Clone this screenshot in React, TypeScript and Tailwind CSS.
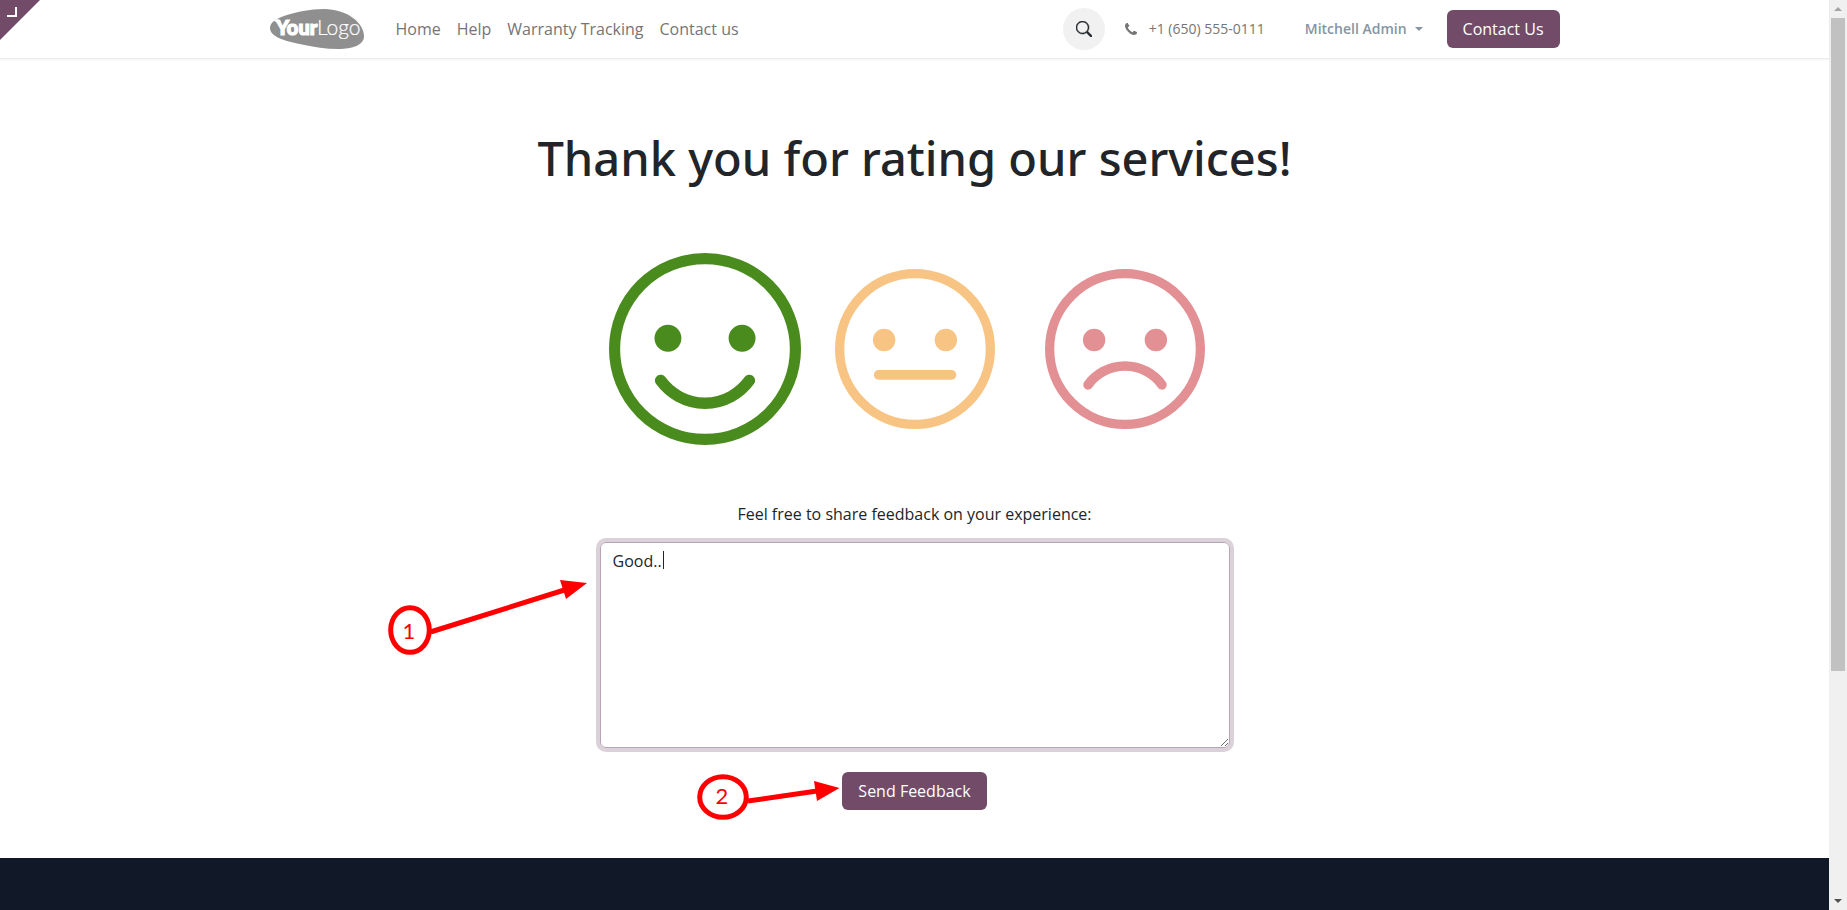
import { useState } from "react";

const NAV = ["Home", "Help", "Warranty Tracking", "Contact us"];

function Logo() {
  return (
    <svg viewBox="0 0 94 40" className="h-10 w-[94px]" role="img" aria-label="Your Logo">
      <path
        d="M0 19C0 14 5 10 14 7C26 3 40 0 54 0C77 0 94 14 94 27C94 36 83 40 68 40C56 40 44 38 32 35.500C13 32 0 27 0 19Z"
        fill="#8f8f8f"
      />
      <path d="M3.500 11.500L6 11L7 10L8.500 11L10 10.500L11 14L8 13.500L6 13Z" fill="#fff" />
      <text x="6" y="26" fontFamily="Lato, sans-serif" fontWeight="900" fontSize="20" fill="#fff" stroke="#fff" strokeWidth="1.200">
        Your
      </text>
      <text x="47" y="26" fontFamily="Lato, sans-serif" fontWeight="300" fontSize="21" fill="#fff" stroke="#fff" strokeWidth="0.200">
        Logo
      </text>
    </svg>
  );
}

const MOUTHS = {
  happy: "M26.900 66.400A28.500 28.500 0 0 0 73.100 66.400",
  neutral: "M27.300 66.200H72.800",
  sad: "M26.900 72.400A28.500 28.500 0 0 1 73.100 72.400",
};

function Face({ mood }: { mood: keyof typeof MOUTHS }) {
  return (
    <svg viewBox="0 0 100 100" className="size-full" aria-hidden="true">
      <circle cx="50" cy="50" r="47.100" fill="none" stroke="currentColor" strokeWidth="5.800" />
      <circle cx="30.700" cy="44.400" r="7" fill="currentColor" />
      <circle cx="69.300" cy="44.400" r="7" fill="currentColor" />
      <path d={MOUTHS[mood]} fill="none" stroke="currentColor" strokeWidth="6" strokeLinecap="round" />
    </svg>
  );
}

function Header() {
  return (
    <header className="border-b border-[#ebebeb] shadow-[0_1px_2px_rgba(0,0,0,0.05)]">
      <div className="mx-auto flex h-[58px] max-w-[1320px] items-center px-[15px]">
        <a href="#home" className="mr-6">
          <Logo />
        </a>
        <nav className="flex">
          {NAV.map((item) => (
            <a key={item} href={`#${item}`} className="px-2 text-base leading-6 text-[#757575]">
              {item}
            </a>
          ))}
        </nav>
        <div className="ml-auto flex items-center">
          <button type="button" aria-label="Search" className="flex size-[42px] items-center justify-center rounded-full bg-[#f1f1f1]">
            <svg viewBox="0 0 16 16" className="size-4" aria-hidden="true" fill="#212529" stroke="#212529" strokeWidth="0.500">
              <path d="M11.742 10.344a6.500 6.500 0 1 0-1.397 1.398h-.001c.030.040.062.078.098.115l3.850 3.850a1 1 0 0 0 1.415-1.414l-3.850-3.850a1.007 1.007 0 0 0-.115-.100zM12 6.500a5.500 5.500 0 1 1-11 0 5.500 5.500 0 0 1 11 0z" />
            </svg>
          </button>
          <a href="tel:+16505550111" className="ml-5 flex items-center text-sm leading-6 text-[#757575]">
            <svg viewBox="0 0 1408 1408" className="mr-3 size-3" aria-hidden="true" fill="currentColor">
              <path d="M1408 1112q0 27-10 70.500t-21 68.500q-21 50-122 106-94 51-186 51-27 0-53-3.500t-57.500-12.500-47-14.500-55.500-20.500-49-18q-98-35-175-83-127-79-264-216t-216-264q-48-77-83-175-3-9-18-49t-20.500-55.500-14.500-47-12.500-57.500-3.500-53q0-92 51-186 56-101 106-122 25-11 68.500-21t70.500-10q14 0 21 3 18 6 53 76 11 19 30 54t35 63.500 31 53.500q3 4 17.500 25t21.500 35.500 7 28.500q0 20-28.500 50t-62 55-62 53-28.500 46q0 9 5 22.500t8.500 20.500 14 24 11.500 19q76 137 174 235t235 174q2 1 19 11.500t24 14 20.500 8.500 22.500 5q18 0 46-28.500t53-62 55-62 50-28.500q14 0 28.500 7t35.500 21.500 25 17.500q25 15 53.500 31t63.500 35 54 30q70 35 76 53 3 7 3 21z" />
            </svg>
            +1 (650) 555-0111
          </a>
          <button type="button" className="ml-10 flex items-center text-sm leading-6 font-semibold text-[#8595a2]">
            Mitchell Admin
            <svg viewBox="0 0 8 4" className="ml-2 h-1 w-2" aria-hidden="true">
              <path d="M0 0H8L4 4Z" fill="currentColor" />
            </svg>
          </button>
          <a href="#contact" className="ml-6 rounded-md bg-[#714b67] px-4 py-[7px] text-base leading-6 text-white">
            Contact Us
          </a>
        </div>
      </div>
    </header>
  );
}

function Notes() {
  return (
    <svg
      viewBox="380 530 470 300"
      className="pointer-events-none absolute -top-3 left-[-220px] h-[300px] w-[470px]"
      fill="none"
      stroke="#f00"
      strokeWidth="5"
    >
      <ellipse cx="410" cy="630" rx="19.300" ry="22.300" />
      <path d="M432 631.500L566 589.500" strokeLinecap="round" />
      <path d="M587 583L560 580L566 599Z" fill="#f00" stroke="none" />
      <ellipse cx="723" cy="797" rx="23.300" ry="20.300" />
      <path d="M748 801L817 791" />
      <path d="M839.500 788L814 781L817 801Z" fill="#f00" stroke="none" />
      <g fill="#f00" stroke="none" fontFamily="Lato, sans-serif" fontSize="22" textAnchor="middle">
        <text x="409" y="639">1</text>
        <text x="722" y="804">2</text>
      </g>
    </svg>
  );
}

function Scrollbar() {
  return (
    <div className="flex w-[18px] shrink-0 flex-col items-center bg-[#f0f0f0]" aria-hidden="true">
      <div className="flex h-[18px] items-center">
        <svg viewBox="0 0 8 4" className="h-1 w-2">
          <path d="M0 4H8L4 0Z" fill="#a3a3a3" />
        </svg>
      </div>
      <div className="w-full flex-1 px-0.5">
        <div className="h-[74.7%] bg-[#c1c1c1]" />
      </div>
      <div className="flex h-[18px] items-center">
        <svg viewBox="0 0 8 4" className="h-1 w-2">
          <path d="M0 0H8L4 4Z" fill="#505050" />
        </svg>
      </div>
    </div>
  );
}

export default function App() {
  const [feedback, setFeedback] = useState("Good..");
  return (
    <div className="flex h-screen overflow-hidden bg-white font-['Open_Sans',sans-serif] text-[#212529]">
      <div className="relative flex min-w-0 flex-1 flex-col">
        <svg viewBox="0 0 40 40" className="absolute top-0 left-0 size-10" aria-hidden="true">
          <path d="M0 0H40L0 40Z" fill="#714b67" />
          <path d="M7 16H16V7" fill="none" stroke="#fff" strokeWidth="2" />
        </svg>
        <Header />
        <main className="flex flex-col items-center pt-16 pb-12">
          <h1 className="font-['Noto_Sans',sans-serif] text-[47px] leading-[70px] font-medium">
            Thank you for rating our services!
          </h1>
          <div className="mt-[60px] flex h-[192px] items-center gap-[50px]">
            <button type="button" aria-label="Satisfied" className="-mx-4 size-[192px] text-[#4a8b1e]">
              <Face mood="happy" />
            </button>
            <button type="button" aria-label="Okay" className="size-[160px] text-[#f8c483]">
              <Face mood="neutral" />
            </button>
            <button type="button" aria-label="Dissatisfied" className="size-[160px] text-[#e39094]">
              <Face mood="sad" />
            </button>
          </div>
          <form className="mt-[57px] flex w-full max-w-[630px] flex-col items-center" onSubmit={(e) => e.preventDefault()}>
            <label htmlFor="feedback" className="text-base leading-6">
              Feel free to share feedback on your experience:
            </label>
            <div className="relative mt-4 w-full">
              <textarea
                id="feedback"
                rows={8}
                value={feedback}
                onChange={(e) => setFeedback(e.target.value)}
                className="block w-full rounded-md border border-[#b8a5b3] px-3 py-1.5 text-base leading-6 ring-4 ring-[#dbd1d9] outline-none"
              />
              <span className="absolute top-[9px] left-[63px] h-[18px] w-px bg-[#212529]" aria-hidden="true" />
              <Notes />
            </div>
            <button type="submit" className="mt-6 rounded-md bg-[#714b67] px-4 py-[7px] text-base leading-6 text-white">
              Send Feedback
            </button>
          </form>
        </main>
        <footer className="flex-1 bg-[#111827]" />
      </div>
      <Scrollbar />
    </div>
  );
}
